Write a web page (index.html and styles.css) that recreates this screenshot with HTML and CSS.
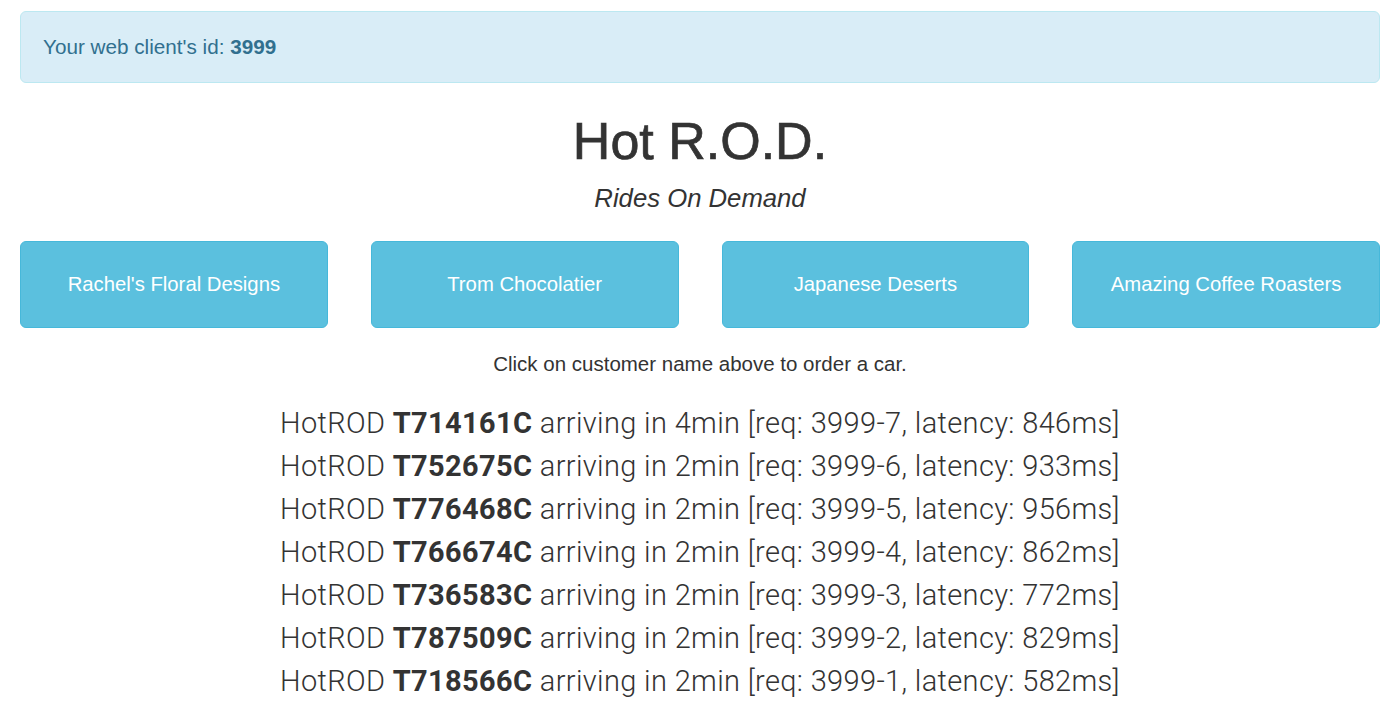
FILE: index.html
```html
<!DOCTYPE html>
<html>
<head>
<meta charset="utf-8">
<link rel="stylesheet" href="styles.css">
</head>
<body>
<div class="page">
  <div class="alert">Your web client's id: <strong>3999</strong></div>
  <h1 class="title">Hot R.O.D.</h1>
  <p class="subtitle">Rides On Demand</p>
  <div class="customers">
    <button class="btn">Rachel's Floral Designs</button>
    <button class="btn">Trom Chocolatier</button>
    <button class="btn">Japanese Deserts</button>
    <button class="btn">Amazing Coffee Roasters</button>
  </div>
  <p class="hint">Click on customer name above to order a car.</p>
  <div class="rides">
    <div class="ride">HotROD <b>T714161C</b> arriving in 4min [req: 3999-7, latency: 846ms]</div>
    <div class="ride">HotROD <b>T752675C</b> arriving in 2min [req: 3999-6, latency: 933ms]</div>
    <div class="ride">HotROD <b>T776468C</b> arriving in 2min [req: 3999-5, latency: 956ms]</div>
    <div class="ride">HotROD <b>T766674C</b> arriving in 2min [req: 3999-4, latency: 862ms]</div>
    <div class="ride">HotROD <b>T736583C</b> arriving in 2min [req: 3999-3, latency: 772ms]</div>
    <div class="ride">HotROD <b>T787509C</b> arriving in 2min [req: 3999-2, latency: 829ms]</div>
    <div class="ride">HotROD <b>T718566C</b> arriving in 2min [req: 3999-1, latency: 582ms]</div>
  </div>
</div>
</body>
</html>
```

FILE: styles.css
```css
html, body {
  margin: 0;
  padding: 0;
  background: #fff;
}
body {
  font-family: "Liberation Sans", Arial, sans-serif;
  color: #333;
  font-size: 20px;
}
.page {
  padding: 11px 20px 0 20px;
}
.alert {
  background: #d9edf7;
  border: 1px solid #bce8f1;
  border-radius: 6px;
  color: #31708f;
  padding: 22px 22px;
  line-height: 26px;
  font-size: 20.7px;
}
.alert strong {
  font-weight: 700;
}
.title {
  margin: 30px 0 0 0;
  text-align: center;
  font-size: 52px;
  font-weight: 400;
  line-height: 57px;
  -webkit-text-stroke: 0.7px #333;
}
.subtitle {
  margin: 14px 0 0 0;
  text-align: center;
  font-style: italic;
  font-size: 25.7px;
  line-height: 28px;
}
.customers {
  margin-top: 29px;
  display: grid;
  grid-template-columns: repeat(4, 1fr);
  column-gap: 43px;
}
.btn {
  height: 87px;
  background: #5bc0de;
  border: 1px solid #46b8da;
  border-radius: 6px;
  color: #fff;
  font-family: "Liberation Sans", Arial, sans-serif;
  font-size: 20.3px;
  padding: 0 10px;
  cursor: pointer;
}
.hint {
  margin: 22px 0 0 0;
  text-align: center;
  font-size: 20.5px;
  line-height: 28px;
}
.rides {
  margin-top: 24px;
  text-align: center;
}
.ride {
  font-family: Roboto, "Liberation Sans", sans-serif;
  font-weight: 300;
  font-size: 29px;
  letter-spacing: 0.35px;
  line-height: 43px;
  font-variant-numeric: tabular-nums;
}
.ride b {
  font-weight: 700;
}
```
